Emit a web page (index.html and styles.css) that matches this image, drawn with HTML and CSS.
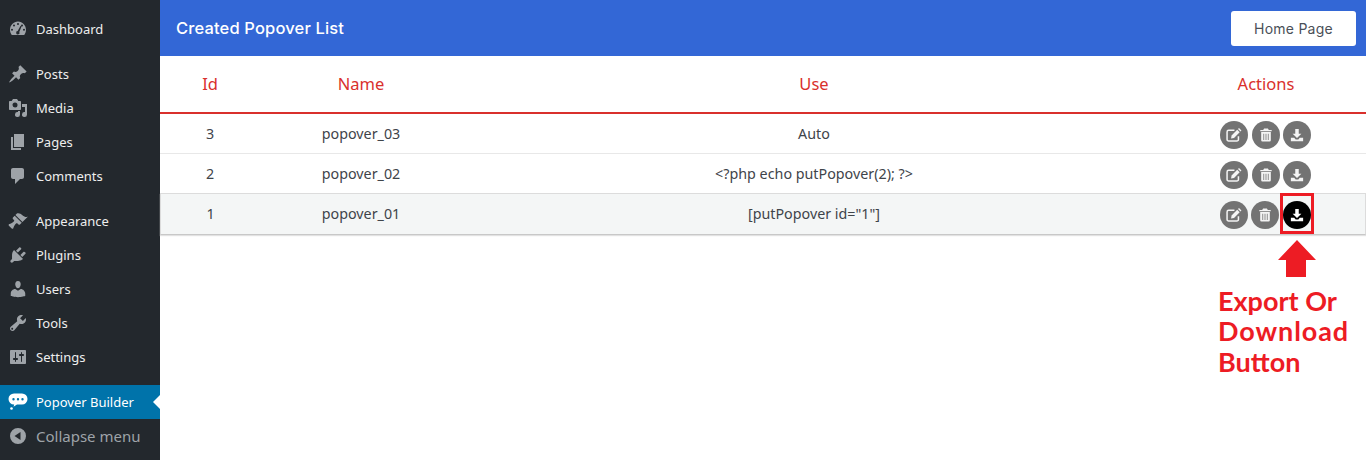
FILE: index.html
```html
<!DOCTYPE html>
<html lang="en">
<head>
<meta charset="utf-8">
<title>Created Popover List</title>
<link rel="stylesheet" href="styles.css">
</head>
<body>
<svg class="defs" width="0" height="0" aria-hidden="true">
  <symbol id="i-edit" viewBox="0 0 18 18">
    <path d="M12.600 3.200 15.400 6 9 12.400 5.700 13l.6-3.300z" fill="currentColor"/>
    <path d="M13.500 2.300 14.600 1.200 17.400 4 16.300 5.100z" fill="currentColor"/>
    <path d="M14 10.500V14a1.800 1.800 0 0 1-1.800 1.800H3A1.800 1.800 0 0 1 1.200 14V5.500A1.800 1.800 0 0 1 3 3.700h6.500" fill="none" stroke="currentColor" stroke-width="1.700"/>
  </symbol>
  <symbol id="i-trash" viewBox="0 0 16 16">
    <path d="M5.800 .5h4.400l1 1.800H14.500v1.500h-13V2.300h3.300z" fill="currentColor"/>
    <path d="M2.500 4.600h11V14a1.500 1.500 0 0 1-1.500 1.500H4A1.500 1.500 0 0 1 2.500 14zM5 6.500v7.200h.9V6.500zm2.550 0v7.200h.9V6.500zM10.100 6.500v7.200h.9V6.500z" fill="currentColor" fill-rule="evenodd"/>
  </symbol>
  <symbol id="i-down" viewBox="0 0 16 16">
    <path d="M6 1h4v5.500h3L8 11.500 3 6.500h3z" fill="currentColor"/>
    <path d="M1 11.200h3.800L6.500 13h3l1.700-1.800H15V15H1z" fill="currentColor"/>
  </symbol>
</svg>
<div class="layout">
  <nav class="sidebar">
    <ul class="menu">
      <li class="item"><svg class="mi" viewBox="0 0 20 20"><path fill="currentColor" fill-rule="evenodd" d="M3.760 16h12.480C17.340 14.570 18 12.790 18 10.860 18 6.220 14.410 2.500 10 2.500s-8 3.720-8 8.360c0 1.930.66 3.710 1.760 5.140zM10 4a1 1 0 1 1 0 2 1 1 0 0 1 0-2zM6 5.600a1 1 0 1 1 0 2 1 1 0 0 1 0-2zm8 0a1 1 0 1 1 0 2 1 1 0 0 1 0-2zM4 9.700a1 1 0 1 1 0 2 1 1 0 0 1 0-2zm12 0a1 1 0 1 1 0 2 1 1 0 0 1 0-2zM12.600 6.800l1 .5-2.300 5.600a1.700 1.700 0 1 1-1.600-.8z"/></svg><span>Dashboard</span></li>
    </ul>
    <ul class="menu">
      <li class="item"><svg class="mi" viewBox="0 0 20 20"><path fill="currentColor" d="M10.440 3.020l1.820-1.820 6.360 6.350-1.830 1.820c-1.050-.68-2.480-.57-3.410.36l-.75.75c-.92.93-1.040 2.350-.35 3.410l-1.830 1.820-2.410-2.410-2.800 2.790c-.42.42-3.380 2.710-3.800 2.290s1.860-3.390 2.280-3.810l2.790-2.790L4.100 9.360l1.830-1.820c1.050.69 2.480.57 3.400-.36l.75-.75c.93-.92 1.050-2.350.36-3.410z"/></svg><span>Posts</span></li>
      <li class="item"><svg class="mi" viewBox="0 0 20 20"><path fill="currentColor" fill-rule="evenodd" d="M13 11V4c0-.55-.45-1-1-1h-1.670L9 1H5L3.670 3H2c-.55 0-1 .45-1 1v7c0 .55.45 1 1 1h10c.55 0 1-.45 1-1zM7 4.500a2.500 2.500 0 1 1 0 5 2.500 2.500 0 0 1 0-5zM14 6h5v10.500a2.500 2.500 0 1 1-2-2.450V9h-3zm-4 8.050V13h2v3.500a2.500 2.500 0 1 1-2-2.450z"/></svg><span>Media</span></li>
      <li class="item"><svg class="mi" viewBox="0 0 20 20"><path fill="currentColor" d="M6 15V2h10v13H6zm-1 1h8v2H3V5h2v11z"/></svg><span>Pages</span></li>
      <li class="item"><svg class="mi" viewBox="0 0 20 20"><path fill="currentColor" d="M5 2h9c1.100 0 2 .9 2 2v7c0 1.100-.9 2-2 2h-2l-5 5v-5H5c-1.100 0-2-.9-2-2V4c0-1.100.9-2 2-2z"/></svg><span>Comments</span></li>
    </ul>
    <ul class="menu">
      <li class="item"><svg class="mi" viewBox="0 0 20 20"><path fill="currentColor" d="M14.480 11.060L7.410 3.990l1.500-1.500c.5-.56 2.300-.47 3.510.32 1.210.8 1.430 1.280 2.910 2.100 1.180.64 2.450 1.260 4.450.85zm-.71.71L6.700 4.700 4.930 6.470c-.39.39-.39 1.020 0 1.410l1.060 1.060c.39.39.39 1.030 0 1.420-.6.6-1.430 1.270-2.210 1.700-.55.3-1.090.52-1.550.69-.43.16-.8.28-1.030.36-.12.04-.24.1-.31.17-.39.39-.39 1.020 0 1.410l2.830 2.830c.39.39 1.020.39 1.410 0 .07-.07.13-.19.17-.31.08-.23.2-.6.36-1.030.17-.46.39-1 .69-1.550.43-.78 1.100-1.610 1.700-2.210.39-.39 1.030-.39 1.420 0l1.060 1.060c.39.39 1.020.39 1.410 0z"/></svg><span>Appearance</span></li>
      <li class="item"><svg class="mi" viewBox="0 0 20 20"><path fill="currentColor" d="M13.110 4.360L9.870 7.600 8 5.730l3.240-3.240c.35-.34 1.050-.2 1.560.32.52.51.66 1.210.31 1.550zm-8 1.770l.91-1.120 9.010 9.010-1.190.84c-.71.71-2.630 1.160-3.820 1.160H6.140L4.900 17.260c-.59.59-1.540.59-2.120 0-.59-.58-.59-1.530 0-2.120l1.240-1.240v-3.880c0-1.130.4-3.190 1.090-3.890zm7.260 3.970l3.240-3.240c.34-.35 1.040-.2 1.560.31.51.52.65 1.220.31 1.560l-3.240 3.250z"/></svg><span>Plugins</span></li>
      <li class="item"><svg class="mi" viewBox="0 0 20 20"><path fill="currentColor" d="M10 9.250c-2.270 0-2.730-3.440-2.730-3.440C7 4.020 7.820 2 9.970 2c2.160 0 2.980 2.020 2.710 3.810 0 0-.41 3.440-2.680 3.440zm0 2.570L12.720 10c2.390 0 4.520 2.330 4.520 4.530v2.490s-3.650 1.130-7.240 1.130c-3.650 0-7.240-1.130-7.240-1.130v-2.490c0-2.250 1.940-4.480 4.470-4.480z"/></svg><span>Users</span></li>
      <li class="item"><svg class="mi" viewBox="0 0 20 20"><path fill="currentColor" fill-rule="evenodd" d="M16.680 9.770c-1.340 1.340-3.300 1.670-4.950.99l-5.410 6.520c-.99.99-2.590.99-3.570 0-.99-.98-.99-2.580 0-3.570l6.520-5.420c-.68-1.650-.35-3.610.99-4.950 1.280-1.280 3.120-1.620 4.720-1.060l-2.890 2.890 2.820 2.820 2.860-2.870c.53 1.580.18 3.400-1.090 4.670zM4.930 16.430c.39-.39.39-1.020 0-1.410-.39-.39-1.030-.39-1.420 0-.39.39-.39 1.020 0 1.410.39.39 1.030.39 1.420 0z"/></svg><span>Tools</span></li>
      <li class="item"><svg class="mi" viewBox="0 0 20 20"><path fill="currentColor" fill-rule="evenodd" d="M18 16V4c0-.55-.45-1-1-1H3c-.55 0-1 .45-1 1v12c0 .55.45 1 1 1h14c.55 0 1-.45 1-1zM8 11h1c.55 0 1 .45 1 1s-.45 1-1 1H8v1.500c0 .28-.22.5-.5.5s-.5-.22-.5-.5V13H6c-.55 0-1-.45-1-1s.45-1 1-1h1V5.500c0-.28.22-.5.5-.5s.5.22.5.5V11zm5-2h-1c-.55 0-1-.45-1-1s.45-1 1-1h1V5.500c0-.28.22-.5.5-.5s.5.22.5.5V7h1c.55 0 1 .45 1 1s-.45 1-1 1h-1v5.500c0 .28-.22.5-.5.5s-.5-.22-.5-.5V9z"/></svg><span>Settings</span></li>
    </ul>
    <ul class="menu">
      <li class="item current"><svg class="mi" viewBox="0 0 20 20"><path fill="currentColor" fill-rule="evenodd" d="M6 1.500h8a5.500 5.500 0 0 1 0 11H9l-3.500 2.300.7-2.300H6a5.500 5.500 0 0 1 0-11zM5.500 6a1.200 1.200 0 1 0 0 2.400 1.200 1.200 0 0 0 0-2.400zm4.500 0a1.200 1.200 0 1 0 0 2.400A1.200 1.200 0 0 0 10 6zm4.500 0a1.200 1.200 0 1 0 0 2.400 1.200 1.200 0 0 0 0-2.400z"/><circle cx="3.500" cy="16.500" r="1.300" fill="currentColor"/></svg><span>Popover Builder</span></li>
      <li class="item collapse"><svg class="mi" viewBox="0 0 20 20"><path fill="currentColor" fill-rule="evenodd" d="M18 10a8 8 0 1 0-16 0 8 8 0 0 0 16 0zm-5.500-4v8L6.500 10z"/></svg><span>Collapse menu</span></li>
    </ul>
  </nav>
  <main class="content">
    <header class="topbar">
      <h1 class="title">Created Popover List</h1>
      <a class="home" href="#">Home Page</a>
    </header>
    <table class="list">
      <colgroup><col class="c-id"><col class="c-name"><col class="c-use"><col class="c-act"></colgroup>
      <thead>
        <tr><th>Id</th><th>Name</th><th>Use</th><th>Actions</th></tr>
      </thead>
      <tbody>
        <tr class="r1">
          <td>3</td><td>popover_03</td><td>Auto</td>
          <td><div class="acts">
            <span class="btn"><svg class="ic-edit"><use href="#i-edit"/></svg></span>
            <span class="btn"><svg class="ic-trash"><use href="#i-trash"/></svg></span>
            <span class="btn"><svg class="ic-down"><use href="#i-down"/></svg></span>
          </div></td>
        </tr>
        <tr class="r2">
          <td>2</td><td>popover_02</td><td>&lt;?php echo putPopover(2); ?&gt;</td>
          <td><div class="acts">
            <span class="btn"><svg class="ic-edit"><use href="#i-edit"/></svg></span>
            <span class="btn"><svg class="ic-trash"><use href="#i-trash"/></svg></span>
            <span class="btn"><svg class="ic-down"><use href="#i-down"/></svg></span>
          </div></td>
        </tr>
        <tr class="r3">
          <td>1</td><td>popover_01</td><td>[putPopover id="1"]</td>
          <td><div class="acts">
            <span class="btn"><svg class="ic-edit"><use href="#i-edit"/></svg></span>
            <span class="btn"><svg class="ic-trash"><use href="#i-trash"/></svg></span>
            <span class="btn dark"><svg class="ic-down"><use href="#i-down"/></svg></span>
          </div></td>
        </tr>
      </tbody>
    </table>
    <div class="redbox"></div>
    <svg class="arrow" viewBox="0 0 38 37"><path fill="#ed1c24" d="M19 0 38 20H28V37H8V20H0z"/></svg>
    <div class="note"><div class="ln">Export Or</div><div class="ln wide">Download</div><div class="ln last">Button</div></div>
  </main>
</div>
</body>
</html>
```
FILE: styles.css
```css
* { box-sizing: border-box; }
html, body { margin: 0; padding: 0; height: 100%; background: #fff; }
body { font-family: "Noto Sans", "Open Sans", sans-serif; overflow: hidden; }
.defs { position: absolute; }
.layout { display: flex; height: 460px; }

.sidebar { width: 160px; flex: none; background: #23282d; padding-top: 12px; }
.menu { list-style: none; margin: 0 0 11px; padding: 0; }
.item { height: 34px; display: flex; align-items: center; padding-left: 8px; color: #eee; font-size: 13px; position: relative; }
.mi { width: 20px; height: 20px; color: #9ea3a8; flex: none; margin-right: 8px; }
.current { background: #0073aa; color: #fff; }
.current .mi { color: #fff; }
.current::after { content: ""; position: absolute; right: 0; top: 10px; border: 7px solid transparent; border-right-color: #fff; border-left-width: 0; }
.collapse { color: #9ea3a8; font-size: 15px; }

.content { flex: 1; position: relative; min-width: 0; }
.topbar { height: 56px; background: #3367d6; display: flex; align-items: center; justify-content: space-between; padding: 0 10px 0 16px; }
.title { margin: 0; color: #fff; font-family: Inter, "Noto Sans", sans-serif; font-size: 16.500px; letter-spacing: .15px; font-weight: 500; }
.home { width: 125px; height: 35px; margin-top: 1px; background: #fff; border-radius: 3px; display: flex; align-items: center; justify-content: center; color: #4a4f57; font-family: Inter, "Noto Sans", sans-serif; font-size: 14px; letter-spacing: .25px; text-decoration: none; }

.list { width: 100%; border-collapse: separate; border-spacing: 0; table-layout: fixed; color: #3f444a; font-size: 14.300px; text-align: center; }
.c-id { width: 100px; } .c-name { width: 202px; } .c-use { width: 704px; } .c-act { width: 200px; }
.list th { height: 58px; padding: 0 0 2px; font-size: 16.500px; font-weight: 400; color: #d9302c; border-bottom: 2px solid #d9302c; }
.list td { padding: 0; }
.r1 td { height: 40px; border-bottom: 1px solid #e8e8e8; }
.r2 td { height: 39px; }
.r3 { box-shadow: 0 1px 1px #e2e2e2; }
.list .r3 td { height: 42px; padding-bottom: 1px; background: #f4f6f6; border-top: 1px solid #dcdcdc; border-bottom: 1px solid #c8c8c8; }
.list .r3 td:first-child { border-left: 1px solid #dcdcdc; }
.list .r3 td:last-child { border-right: 1px solid #dcdcdc; }
.acts { display: flex; justify-content: center; gap: 3.500px; padding: 3px 1px 0 0; }
.btn { width: 28px; height: 28px; border-radius: 50%; background: #737373; color: #f4f4f4; display: flex; align-items: center; justify-content: center; }
.ic-edit { width: 16px; height: 16px; }
.ic-trash { width: 14px; height: 14px; }
.ic-down { width: 14px; height: 14px; }
.btn.dark { background: #000; color: #fff; }

.redbox { position: absolute; left: 1120px; top: 193px; width: 34px; height: 41px; border: 3px solid #ed1c24; }
.arrow { position: absolute; left: 1118px; top: 240px; width: 38px; height: 37px; }
.note { position: absolute; left: 1058px; top: 286px; color: #ed1c24; font-family: Lato, "Noto Sans", sans-serif; font-size: 27px; font-weight: 700; line-height: 30px; }
.last { margin-top: 1px; }
.wide { letter-spacing: .9px; }
```
